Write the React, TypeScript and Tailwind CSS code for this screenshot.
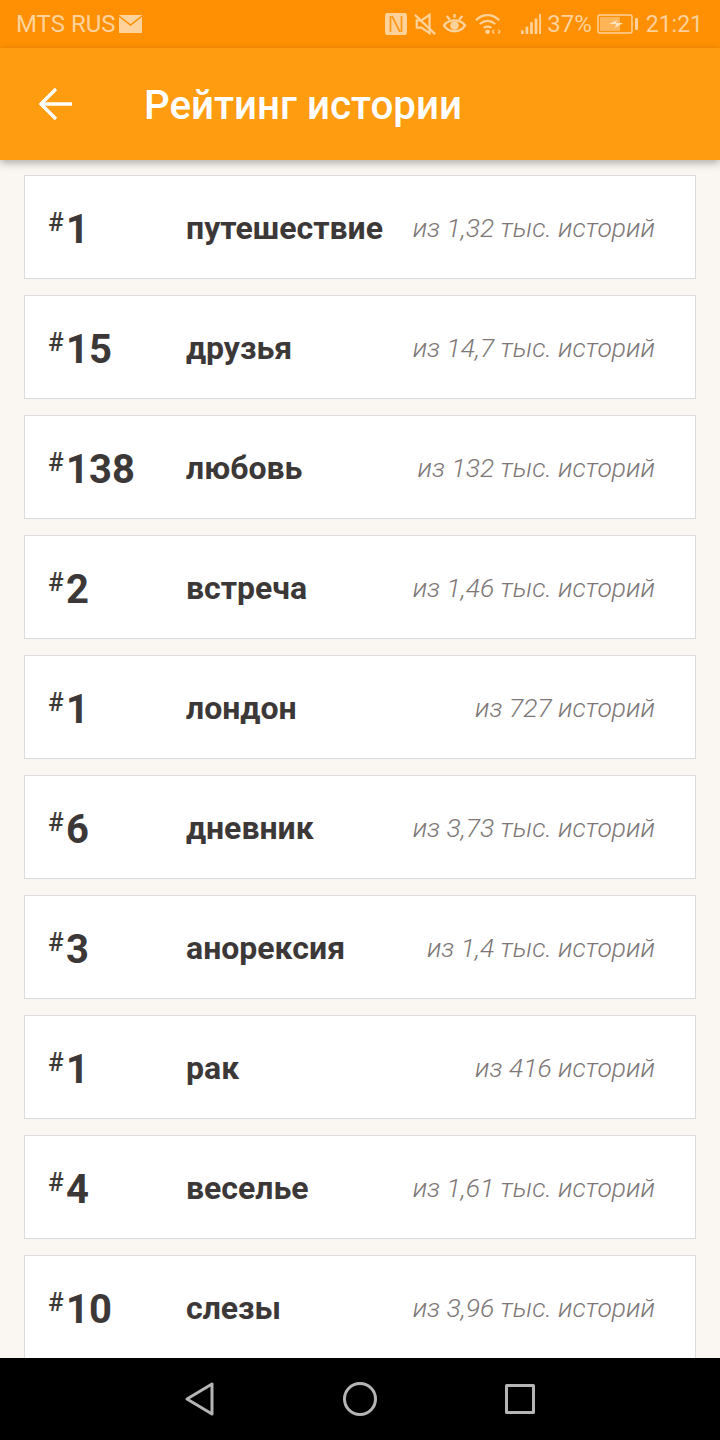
const ROWS = [
  { rank: "1", tag: "путешествие", total: "из 1,32 тыс. историй" },
  { rank: "15", tag: "друзья", total: "из 14,7 тыс. историй" },
  { rank: "138", tag: "любовь", total: "из 132 тыс. историй" },
  { rank: "2", tag: "встреча", total: "из 1,46 тыс. историй" },
  { rank: "1", tag: "лондон", total: "из 727 историй" },
  { rank: "6", tag: "дневник", total: "из 3,73 тыс. историй" },
  { rank: "3", tag: "анорексия", total: "из 1,4 тыс. историй" },
  { rank: "1", tag: "рак", total: "из 416 историй" },
  { rank: "4", tag: "веселье", total: "из 1,61 тыс. историй" },
  { rank: "10", tag: "слезы", total: "из 3,96 тыс. историй" },
];

function StatusBar() {
  return (
    <div className="h-12 shrink-0 bg-[#ff9003] flex items-center pl-[16px] pr-[17px] text-[#ffd29c] text-[24px] leading-none">
      <span>MTS RUS</span>
      <svg width="23" height="18" viewBox="0 0 23 18" className="ml-[3px]">
        <rect width="23" height="18" fill="#ffd29c" />
        <path d="M0 1l11.5 9L23 1" fill="none" stroke="#ff9003" strokeWidth="1.5" />
      </svg>
      <div className="flex-1" />
      {/* nfc */}
      <svg width="22" height="22" viewBox="0 0 22 22" className="mr-[7px]">
        <rect width="22" height="22" rx="3" fill="#ffd29c" />
        <path d="M5.5 3v16M16.5 3v16M7 3l8 16" fill="none" stroke="#ff9a1a" strokeWidth="1.8" />
      </svg>
      {/* muted speaker */}
      <svg width="22" height="24" viewBox="0 0 24 24" className="mr-[6px]" fill="none" stroke="#ffd29c" strokeWidth="2.4">
        <path d="M3 8v8h5l9 6V2L8 8z" />
        <path d="M1 2l22 21" />
      </svg>
      {/* eye comfort */}
      <svg width="25" height="25" viewBox="0 0 26 24" className="mr-[8px]" fill="none" stroke="#ffd29c" strokeWidth="2.4">
        <path d="M2 13c5-7 17-7 22 0-5 8-17 8-22 0z" />
        <circle cx="13" cy="13" r="4.5" fill="#ffd29c" stroke="none" />
        <path d="M13 1v4M5 3l3 4M21 3l-3 4" />
      </svg>
      {/* wifi */}
      <svg width="27" height="24" viewBox="0 0 28 24" className="mr-[19px]" fill="none" stroke="#ffd29c" strokeWidth="2.2">
        <path d="M1 8c7-7 17-7 24 0M5 12c5-4 11-4 16 0M9 16c3-2 5-2 8 0" />
        <circle cx="13" cy="20" r="2.4" fill="#ffd29c" stroke="none" />
        <path d="M20 18l-2 2 2 2M24 18l2 2-2 2" strokeWidth="1.2" />
      </svg>
      {/* signal */}
      <svg width="20" height="22" viewBox="0 0 22 22" className="mr-[6px]" fill="#ffd29c">
        <rect x="0" y="18" width="3" height="4" />
        <rect x="5" y="14" width="3" height="8" />
        <rect x="10" y="9" width="3" height="13" />
        <rect x="15" y="5" width="3" height="17" />
        <rect x="20" y="0" width="2" height="22" />
      </svg>
      <span>37%</span>
      {/* battery */}
      <svg width="41" height="20" viewBox="0 0 41 20" className="ml-[5px] mr-[8px]">
        <rect x="1" y="1" width="34" height="18" rx="1.5" fill="none" stroke="#ffd29c" strokeWidth="1.5" />
        <rect x="3" y="3" width="20" height="14" fill="#ffd29c" opacity="0.55" />
        <path d="M12 10l8-4-1 3h7l-8 5 1-4z" fill="#ffe3bf" />
        <rect x="38" y="4" width="3" height="12" rx="1" fill="#ffd29c" />
      </svg>
      <span className="text-[23px]">21:21</span>
    </div>
  );
}

function TopBar() {
  return (
    <div className="relative z-10 h-[112px] shrink-0 bg-[#ff9c10] flex items-center shadow-[0_3px_8px_rgba(0,0,0,0.3)]">
      <svg width="34" height="34" viewBox="0 0 34 34" className="ml-[39px]" fill="none" stroke="#ffffff" strokeWidth="3.4">
        <path d="M33 17H3M17 2L2 17l15 15" />
      </svg>
      <h1 className="ml-[71px] mt-[5px] text-white text-[40.3px] leading-none font-medium">Рейтинг истории</h1>
    </div>
  );
}

function RatingRow({ rank, tag, total }: { rank: string; tag: string; total: string }) {
  return (
    <div className="h-[104px] shrink-0 bg-white border border-[#dcdcdc] flex items-center pl-[23px] pr-[40px] text-[#3d3838]">
      <div className="w-[138px] shrink-0 flex items-start font-bold">
        <span className="w-[18px] text-[26px] leading-none font-medium mt-[5px]">#</span>
        <span className="text-[40px] leading-[42px] mt-[5px]">{rank}</span>
      </div>
      <span className="text-[32px] leading-none font-bold mt-[1px]">{tag}</span>
      <span className="ml-auto text-[26.5px] leading-none italic font-light text-[#7d7777] mt-[2px]">{total}</span>
    </div>
  );
}

export default function App() {
  return (
    <div className="w-[720px] h-[1440px] flex flex-col overflow-hidden bg-[#faf6f2] font-['Roboto',sans-serif]">
      <StatusBar />
      <TopBar />
      <div className="flex-1 min-h-0 overflow-hidden flex flex-col gap-[16px] pt-[15px] px-[24px]">
        {ROWS.map((row, i) => (
          <RatingRow key={i} {...row} />
        ))}
      </div>
      <div className="h-[82px] shrink-0 bg-black flex items-center justify-center gap-[124px]">
        <svg width="36" height="36" viewBox="0 0 36 36" fill="none" stroke="#b5b5b5" strokeWidth="3" strokeLinejoin="round">
          <path d="M30 3v30L5 18z" />
        </svg>
        <svg width="36" height="36" viewBox="0 0 36 36" fill="none" stroke="#b5b5b5" strokeWidth="3">
          <circle cx="18" cy="18" r="15.5" />
        </svg>
        <svg width="36" height="36" viewBox="0 0 36 36" fill="none" stroke="#b5b5b5" strokeWidth="3" strokeLinejoin="round">
          <rect x="4.5" y="4.5" width="27" height="27" />
        </svg>
      </div>
    </div>
  );
}
